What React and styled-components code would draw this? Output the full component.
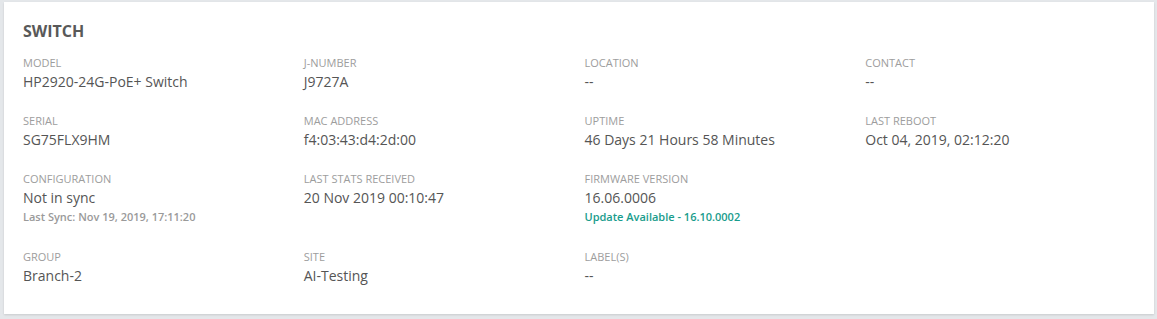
import React from 'react';
import styled, { createGlobalStyle } from 'styled-components';

const GlobalStyle = createGlobalStyle`
  body {
    margin: 0;
    background: #e4e7ea;
    font-family: "Open Sans", "Liberation Sans", sans-serif;
  }
`;

const Page = styled.div`
  padding: 2px 3px 5px 4px;
`;

const Card = styled.section`
  background: #fff;
  box-shadow: 0 1px 2px rgba(0, 0, 0, 0.12);
  padding: 19px 8px 22px 19px;
  height: 312px;
  box-sizing: border-box;
`;

const Title = styled.h2`
  margin: 0 0 15px;
  font-size: 16px;
  font-weight: 700;
  line-height: 20px;
  color: #595959;
`;

const Grid = styled.div`
  display: grid;
  grid-template-columns: repeat(4, 1fr);
  row-gap: 21px;
`;

const Field = styled.div`
  display: flex;
  flex-direction: column;
`;

const Label = styled.div`
  font-size: 11px;
  line-height: 14px;
  color: #9d9d9d;
  text-transform: uppercase;
  margin-bottom: 1px;
`;

const Value = styled.div`
  font-size: 14px;
  line-height: 22px;
  font-weight: 500;
  color: #555;
`;

const Note = styled.div`
  font-size: 11px;
  line-height: 14px;
  font-weight: 600;
  color: ${p => (p.$accent ? '#199c8c' : '#9a9a9a')};
  margin: 1px 0 5px;
`;

const fields = [
  { label: 'Model', value: 'HP2920-24G-PoE+ Switch' },
  { label: 'J-Number', value: 'J9727A' },
  { label: 'Location', value: '--' },
  { label: 'Contact', value: '--' },
  { label: 'Serial', value: 'SG75FLX9HM' },
  { label: 'MAC Address', value: 'f4:03:43:d4:2d:00' },
  { label: 'Uptime', value: '46 Days 21 Hours 58 Minutes' },
  { label: 'Last Reboot', value: 'Oct 04, 2019, 02:12:20' },
  { label: 'Configuration', value: 'Not in sync', note: 'Last Sync: Nov 19, 2019, 17:11:20' },
  { label: 'Last Stats Received', value: '20 Nov 2019 00:10:47' },
  { label: 'Firmware Version', value: '16.06.0006', note: 'Update Available - 16.10.0002', accent: true },
  null,
  { label: 'Group', value: 'Branch-2' },
  { label: 'Site', value: 'AI-Testing' },
  { label: 'Label(s)', value: '--' },
];

export default function App() {
  return (
    <Page>
      <GlobalStyle />
      <Card>
        <Title>SWITCH</Title>
        <Grid>
          {fields.map((f, i) =>
            f ? (
              <Field key={i}>
                <Label>{f.label}</Label>
                <Value>{f.value}</Value>
                {f.note && <Note $accent={f.accent}>{f.note}</Note>}
              </Field>
            ) : (
              <Field key={i} />
            )
          )}
        </Grid>
      </Card>
    </Page>
  );
}
